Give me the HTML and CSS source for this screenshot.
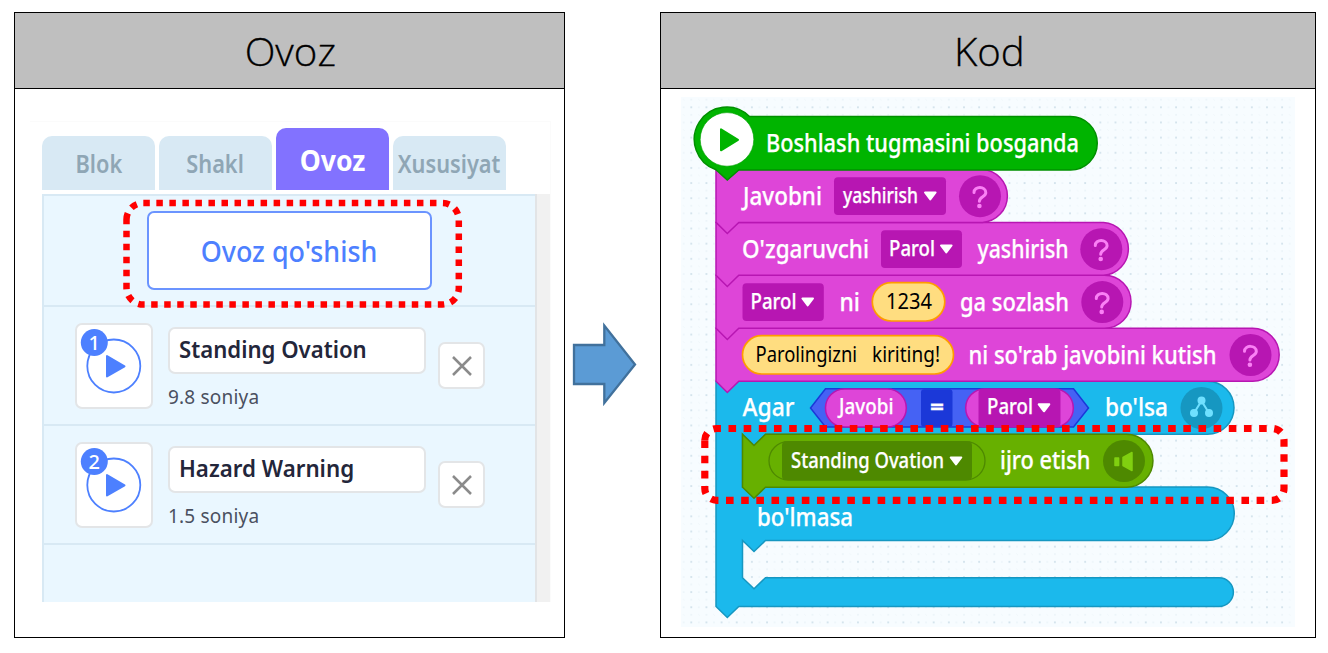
FILE: index.html
```html
<!DOCTYPE html>
<html lang="uz">
<head>
<meta charset="utf-8">
<title>Ovoz va Kod</title>
<link rel="stylesheet" href="styles.css">
</head>
<body>
<main class="page">
  <section class="card card-sound">
    <h1 class="card-title"><span>Ovoz</span></h1>
    <div class="sound-ui">
      <nav class="tabs">
        <div class="tab"><span class="t-blok">Blok</span></div>
        <div class="tab"><span class="t-shakl">Shakl</span></div>
        <div class="tab active"><span class="t-ovoz">Ovoz</span></div>
        <div class="tab"><span class="t-xus">Xususiyat</span></div>
      </nav>
      <div class="panel">
        <div class="list">
          <div class="add-row">
            <button class="add"><span>Ovoz qo'shish</span></button>
            <svg class="marker" width="346" height="114" viewBox="120 197 346 114">
              <path d="M126.5 219.5A16.5 16.5 0 0 1 143 203H442.3A16.5 16.5 0 0 1 458.8 219.5V288A16.5 16.5 0 0 1 442.3 304.5H143A16.5 16.5 0 0 1 126.5 288Z" fill="none" stroke="#f00" stroke-width="6.5" stroke-dasharray="6.5 6.53"/>
            </svg>
          </div>
          <div class="item">
            <div class="thumb">
              <svg width="74" height="82" viewBox="0 0 74 82"><circle cx="36.800" cy="41" r="26.5" fill="none" stroke="#4d80ff" stroke-width="1.800"/><path d="M30 31V51.500L47.500 41.300Z" fill="#4d80ff" stroke="#4d80ff" stroke-width="2" stroke-linejoin="round"/><circle cx="17.300" cy="17.500" r="13.500" fill="#4d80ff"/><text x="17.300" y="25" class="num">1</text></svg>
            </div>
            <div class="info"><div class="name"><span class="n1">Standing Ovation</span></div><div class="time">9.8 soniya</div></div>
            <div class="del"><svg width="20" height="20" viewBox="0 0 20 20"><path d="M1 1L19 19M19 1L1 19" stroke="#8b8b8b" stroke-width="2.500"/></svg></div>
          </div>
          <div class="item">
            <div class="thumb">
              <svg width="74" height="82" viewBox="0 0 74 82"><circle cx="36.800" cy="41" r="26.5" fill="none" stroke="#4d80ff" stroke-width="1.800"/><path d="M30 31V51.500L47.500 41.300Z" fill="#4d80ff" stroke="#4d80ff" stroke-width="2" stroke-linejoin="round"/><circle cx="17.300" cy="17.500" r="13.500" fill="#4d80ff"/><text x="17.300" y="25" class="num">2</text></svg>
            </div>
            <div class="info"><div class="name"><span class="n2">Hazard Warning</span></div><div class="time">1.5 soniya</div></div>
            <div class="del"><svg width="20" height="20" viewBox="0 0 20 20"><path d="M1 1L19 19M19 1L1 19" stroke="#8b8b8b" stroke-width="2.500"/></svg></div>
          </div>
        </div>
        <div class="scroll"></div>
      </div>
    </div>
  </section>

  <div class="arrow">
    <svg width="66" height="86" viewBox="571 321 66 86"><path d="M574 345H604.3V325.500L635 364.500L604.3 403V384H574Z" fill="#5b9bd5" stroke="#41719c" stroke-width="2.300"/></svg>
  </div>

  <section class="card card-code">
    <h1 class="card-title"><span>Kod</span></h1>
    <div class="canvas">
      <svg width="614" height="530" viewBox="681 97 614 530">
        <defs>
          <pattern id="grid" x="683.7" y="99.700" width="15.150" height="15.150" patternUnits="userSpaceOnUse">
            <circle cx="7.600" cy="7.600" r="1.050" fill="#cfe0ea"/>
            <circle cx="15.100" cy="7.600" r=".8" fill="#e6f0f6"/><circle cx="0" cy="7.600" r=".8" fill="#e6f0f6"/>
            <circle cx="7.600" cy="0" r=".8" fill="#e6f0f6"/><circle cx="7.600" cy="15.100" r=".8" fill="#e6f0f6"/>
            <circle cx="0" cy="0" r=".8" fill="#e9f2f7"/><circle cx="15.150" cy="15.150" r=".8" fill="#e9f2f7"/>
          </pattern>
          <g id="help"><circle r="21" fill="#b716b2"/><path d="M-6-3.700C-6-10.300 5.800-10.300 5.800-3.500C5.800 .5-.6 .5-.6 5" fill="none" stroke="#fa80f5" stroke-width="3" stroke-linecap="round"/><circle cx="-.6" cy="9.800" r="2.300" fill="#fa80f5"/></g>
          <path id="caret" d="M-5.300-3H5.300L0 4Z" fill="#fff" stroke="#fff" stroke-width="2" stroke-linejoin="round"/>
        </defs>
        <rect x="681" y="97" width="614" height="530" fill="#f7fcff"/>
        <rect x="681" y="97" width="614" height="530" fill="url(#grid)"/>

        <!-- if / else block -->
        <path class="cyan" d="M716 381.300H1207.500A26.500 26.500 0 0 1 1207.500 434.300H765.500L754 445.500L742.500 434.300V487H1207.500A26.700 26.700 0 0 1 1207.500 540.500H765.500L754 551.500L742.500 540.500V577.700L754 588.700L765.500 577.700H1219A14.400 14.400 0 0 1 1219 606.500H738.800L727.300 617.500L716 606.500Z"/>
        <!-- stacked magenta blocks -->
        <path class="mag" d="M716 328.300H1252.700A26.500 26.500 0 0 1 1252.700 381.300H738.800L727.300 392.500L716 381.300Z"/>
        <path class="mag" d="M716 275.300H1104.500A26.500 26.500 0 0 1 1104.500 328.300H738.800L727.300 339.500L716 328.300Z"/>
        <path class="mag" d="M716 222.400H1103.500A26.500 26.500 0 0 1 1103.500 275.300H738.800L727.300 286.500L716 275.300Z"/>
        <path class="mag" d="M716 169.500H982.500A26.500 26.500 0 0 1 982.500 222.400H738.800L727.300 233.500L716 222.400Z"/>
        <!-- start block -->
        <path d="M749.5 116.500H1070.500A26.700 26.700 0 0 1 1070.500 170H738.800L727.300 180L716 169.800A32.300 32.300 0 1 1 749.500 116.500Z" fill="#00b400" stroke="#009000" stroke-width="1.500"/>
        <circle cx="727" cy="139.400" r="26.800" fill="#fff" stroke="#00a000" stroke-width=".6"/>
        <path d="M721 129.300V150.300L738 139.800Z" fill="#00b400" stroke="#00b400" stroke-width="2" stroke-linejoin="round"/>
        <text class="b" x="766" y="151.600" textLength="313" lengthAdjust="spacingAndGlyphs">Boshlash tugmasini bosganda</text>

        <text class="b" x="743" y="204.600" textLength="79" lengthAdjust="spacingAndGlyphs">Javobni</text>
        <rect class="dm" x="834" y="177.300" width="112" height="37.700" rx="4"/>
        <text class="s" x="843" y="202.600" textLength="75" lengthAdjust="spacingAndGlyphs">yashirish</text><use href="#caret" x="930.300" y="195.500"/>
        <use href="#help" x="980" y="196.200"/>

        <text class="b" x="742" y="257.600" textLength="127" lengthAdjust="spacingAndGlyphs">O'zgaruvchi</text>
        <rect class="dm" x="881" y="230.200" width="81" height="37.700" rx="4"/>
        <text class="s" x="889" y="255.600" textLength="46" lengthAdjust="spacingAndGlyphs">Parol</text><use href="#caret" x="946.300" y="248.500"/>
        <text class="b" x="977.500" y="257.600" textLength="91" lengthAdjust="spacingAndGlyphs">yashirish</text>
        <use href="#help" x="1101.300" y="249.200"/>

        <rect class="dm" x="742.500" y="283.200" width="81.300" height="37.700" rx="4"/>
        <text class="s" x="750.500" y="308.600" textLength="46" lengthAdjust="spacingAndGlyphs">Parol</text><use href="#caret" x="807.700" y="301.500"/>
        <text class="b" x="839.500" y="310.600" textLength="20.500" lengthAdjust="spacingAndGlyphs">ni</text>
        <rect class="yel" x="872.300" y="282.700" width="72.500" height="38.300" rx="19.150"/>
        <text class="k" x="886" y="309" textLength="46" lengthAdjust="spacingAndGlyphs">1234</text>
        <text class="b" x="960" y="310.600" textLength="109" lengthAdjust="spacingAndGlyphs">ga sozlash</text>
        <use href="#help" x="1102.300" y="302.100"/>

        <rect class="yel" x="742.500" y="335.700" width="211" height="38.300" rx="19.150"/>
        <text class="k" x="755.500" y="362.300" textLength="101.500" lengthAdjust="spacingAndGlyphs">Parolingizni</text>
        <text class="k" x="872" y="362.300" textLength="68" lengthAdjust="spacingAndGlyphs">kiriting!</text>
        <text class="b" x="968.500" y="363.600" textLength="248" lengthAdjust="spacingAndGlyphs">ni so'rab javobini kutish</text>
        <use href="#help" x="1250.500" y="355"/>

        <text class="b" x="742.500" y="416.300" textLength="52" lengthAdjust="spacingAndGlyphs">Agar</text>
        <path d="M825.500 388.800H1073.500L1088.500 408L1073.500 427H825.500L810.500 408Z" fill="#4562f4" stroke="#1b38d8" stroke-width="1.500"/>
        <rect class="mag" x="825.500" y="389" width="80.800" height="38" rx="19"/>
        <text class="s" x="839" y="414.300" textLength="54.500" lengthAdjust="spacingAndGlyphs">Javobi</text>
        <rect x="921" y="389.300" width="31.500" height="37.500" rx="3" fill="#1b38d8"/>
        <text class="s eq" x="930" y="414" textLength="14" lengthAdjust="spacingAndGlyphs">=</text>
        <rect class="mag" x="965.700" y="389" width="107.600" height="38" rx="19"/>
        <rect class="dm" x="978.500" y="389" width="82" height="38" rx="4"/>
        <text class="s" x="987" y="414.300" textLength="46" lengthAdjust="spacingAndGlyphs">Parol</text><use href="#caret" x="1044" y="407.300"/>
        <text class="b" x="1105" y="416.300" textLength="63" lengthAdjust="spacingAndGlyphs">bo'lsa</text>
        <circle cx="1201.500" cy="408" r="21" fill="#1697c1"/>
        <path d="M1194 413L1201.500 401L1209 413" fill="none" stroke="#6fe0ff" stroke-width="2"/>
        <g fill="#6fe0ff"><circle cx="1201.500" cy="400.500" r="4"/><circle cx="1194" cy="413" r="4"/><circle cx="1209" cy="413" r="4"/></g>

        <!-- play sound block -->
        <path d="M742.500 434.300L754 445.500L765.500 434.300H1126.500A26.400 26.400 0 0 1 1126.500 487.200H765.500L754 498.200L742.500 487.200Z" fill="#67b000" stroke="#4e8900" stroke-width="1.500"/>
        <rect x="769" y="441.700" width="216" height="38.300" rx="19.150" fill="none" stroke="#4e8900" stroke-width="1.300"/>
        <rect x="782" y="441.500" width="190" height="38.500" rx="4" fill="#4e8900"/>
        <text class="s" x="791" y="467.600" textLength="153" lengthAdjust="spacingAndGlyphs">Standing Ovation</text><use href="#caret" x="956" y="460.500"/>
        <text class="b" x="1000" y="469.300" textLength="90.500" lengthAdjust="spacingAndGlyphs">ijro etish</text>
        <circle cx="1124" cy="461" r="21" fill="#4e8900"/>
        <path d="M1115 458H1118.600V465.500H1115ZM1123 457.500L1132 452.500V470.500L1123 465.500Z" fill="#80d010" stroke="#80d010" stroke-width="1.500" stroke-linejoin="round"/>
        <text class="b" x="757" y="525.800" textLength="96" lengthAdjust="spacingAndGlyphs">bo'lmasa</text>

        <path d="M704.800 440.300A11.800 11.800 0 0 1 716.600 428.500H1272.200A11.800 11.800 0 0 1 1284 440.300V488.500A11.800 11.800 0 0 1 1272.200 500.300H716.600A11.800 11.800 0 0 1 704.800 488.500Z" fill="none" stroke="#f00" stroke-width="7.200" stroke-dasharray="7.600 7.560"/>
      </svg>
    </div>
  </section>
</main>
</body>
</html>
```
FILE: styles.css
```css
* { box-sizing: border-box; }
body { margin: 0; background: #fff; font-family: "Noto Sans", "Open Sans", sans-serif; }
.page { width: 1328px; height: 653px; padding: 12px 0 0 14px; display: flex; overflow: hidden; }
.card { height: 626px; border: 1px solid #000; background: #fff; }
.card-sound { width: 551px; }
.card-code { width: 656px; }
.card-title { margin: 0; height: 76px; background: #bfbfbf; border-bottom: 1px solid #000; display: flex; align-items: center; justify-content: center; font: 300 39px/1 "Open Sans", sans-serif; padding: 0 0 1px 2px; -webkit-text-stroke: .3px #000; }
.card-title span { transform: scaleX(1.03); }
.arrow { width: 95px; padding: 309px 0 0 6px; }
.arrow svg, .canvas svg, .thumb svg, .del svg { display: block; }
.canvas { margin: 8px 0 0 20px; width: 614px; }

.sound-ui { margin: 32px 0 0 15px; width: 521px; border-top: 1px solid #fbfbfb; border-right: 1px solid #fbfbfb; }
.tabs { height: 72px; padding: 0 0 4px 12px; display: flex; gap: 4px; align-items: flex-end; }
.tab { width: 113px; height: 54px; border-radius: 10px 10px 0 0; background: #d8e9f4; color: #8fa6b5; display: flex; align-items: center; justify-content: center; font-weight: 600; font-size: 25px; }
.tab.active { height: 62px; background: #8272ff; color: #fff; font-weight: 700; font-size: 28px; padding-top: 1px; }
.tab span, .add span, .name span { display: block; white-space: nowrap; }
.t-blok, .t-shakl { transform: scaleX(.87); }
.t-ovoz { transform: scaleX(.95); }
.t-xus { transform: scaleX(.87); }
.panel { margin-left: 12px; display: flex; height: 408px; }
.list { width: 494px; border-left: 2px solid #d8e9f4; border-top: 2px solid #d8e9f4; background: #eaf7ff; }
.scroll { width: 15px; background: #f1f1f1; border-left: 2px solid #e2e4e6; }
.add-row { position: relative; height: 111px; padding: 15px 0 0 103px; border-bottom: 2px solid #d8e9f4; }
.add { width: 285px; height: 79px; border: 2px solid #6b94ff; border-radius: 7px; background: #fff; color: #4d80ff; font: 500 28px/1 "Noto Sans", sans-serif; display: flex; align-items: center; justify-content: center; padding: 1px 0 0; }
.add span { transform: scaleX(.96); }
.marker { position: absolute; left: 76px; top: 1px; }
.item { height: 119px; padding: 16px 0 0 31px; border-bottom: 2px solid #d8e9f4; display: flex; }
.thumb { width: 78px; height: 86px; border: 2px solid #e3e5e7; border-radius: 7px; background: #fff; }
.num { font: 500 20px "Noto Sans", sans-serif; fill: #fff; text-anchor: middle; }
.info { margin: 4px 0 0 15px; width: 258px; }
.name { height: 47px; border: 2px solid #e3e5e7; border-radius: 7px; background: #fff; color: #23263a; font-size: 24px; font-weight: 600; line-height: 39px; padding-left: 9px; }
.name span { transform-origin: 0 50%; }
.n1 { transform: scaleX(.923); }
.n2 { transform: scaleX(.93); }
.time { margin-top: 9px; font-size: 19px; line-height: 28px; color: #4a5060; letter-spacing: .2px; }
.del { margin: 19px 0 0 12px; width: 47px; height: 47px; border: 2px solid #e3e5e7; border-radius: 7px; background: #fff; display: grid; place-items: center; }

.canvas text { font-family: "Noto Sans", sans-serif; fill: #fff; font-weight: 500; stroke: #fff; stroke-width: .25px; }
.canvas .b { font-size: 24.5px; }
.canvas .s { font-size: 21px; }
.canvas .eq { font-weight: 700; }
.canvas .k { font-size: 21px; fill: #000; stroke: none; font-weight: 400; }
.mag { fill: #de45d8; stroke: #b716b2; stroke-width: 1.5; }
.cyan { fill: #1bb9ec; stroke: #1697c1; stroke-width: 1.5; }
.dm { fill: #b716b2; }
.yel { fill: #ffdd80; stroke: #ff9c00; stroke-width: 1.7; }
```
